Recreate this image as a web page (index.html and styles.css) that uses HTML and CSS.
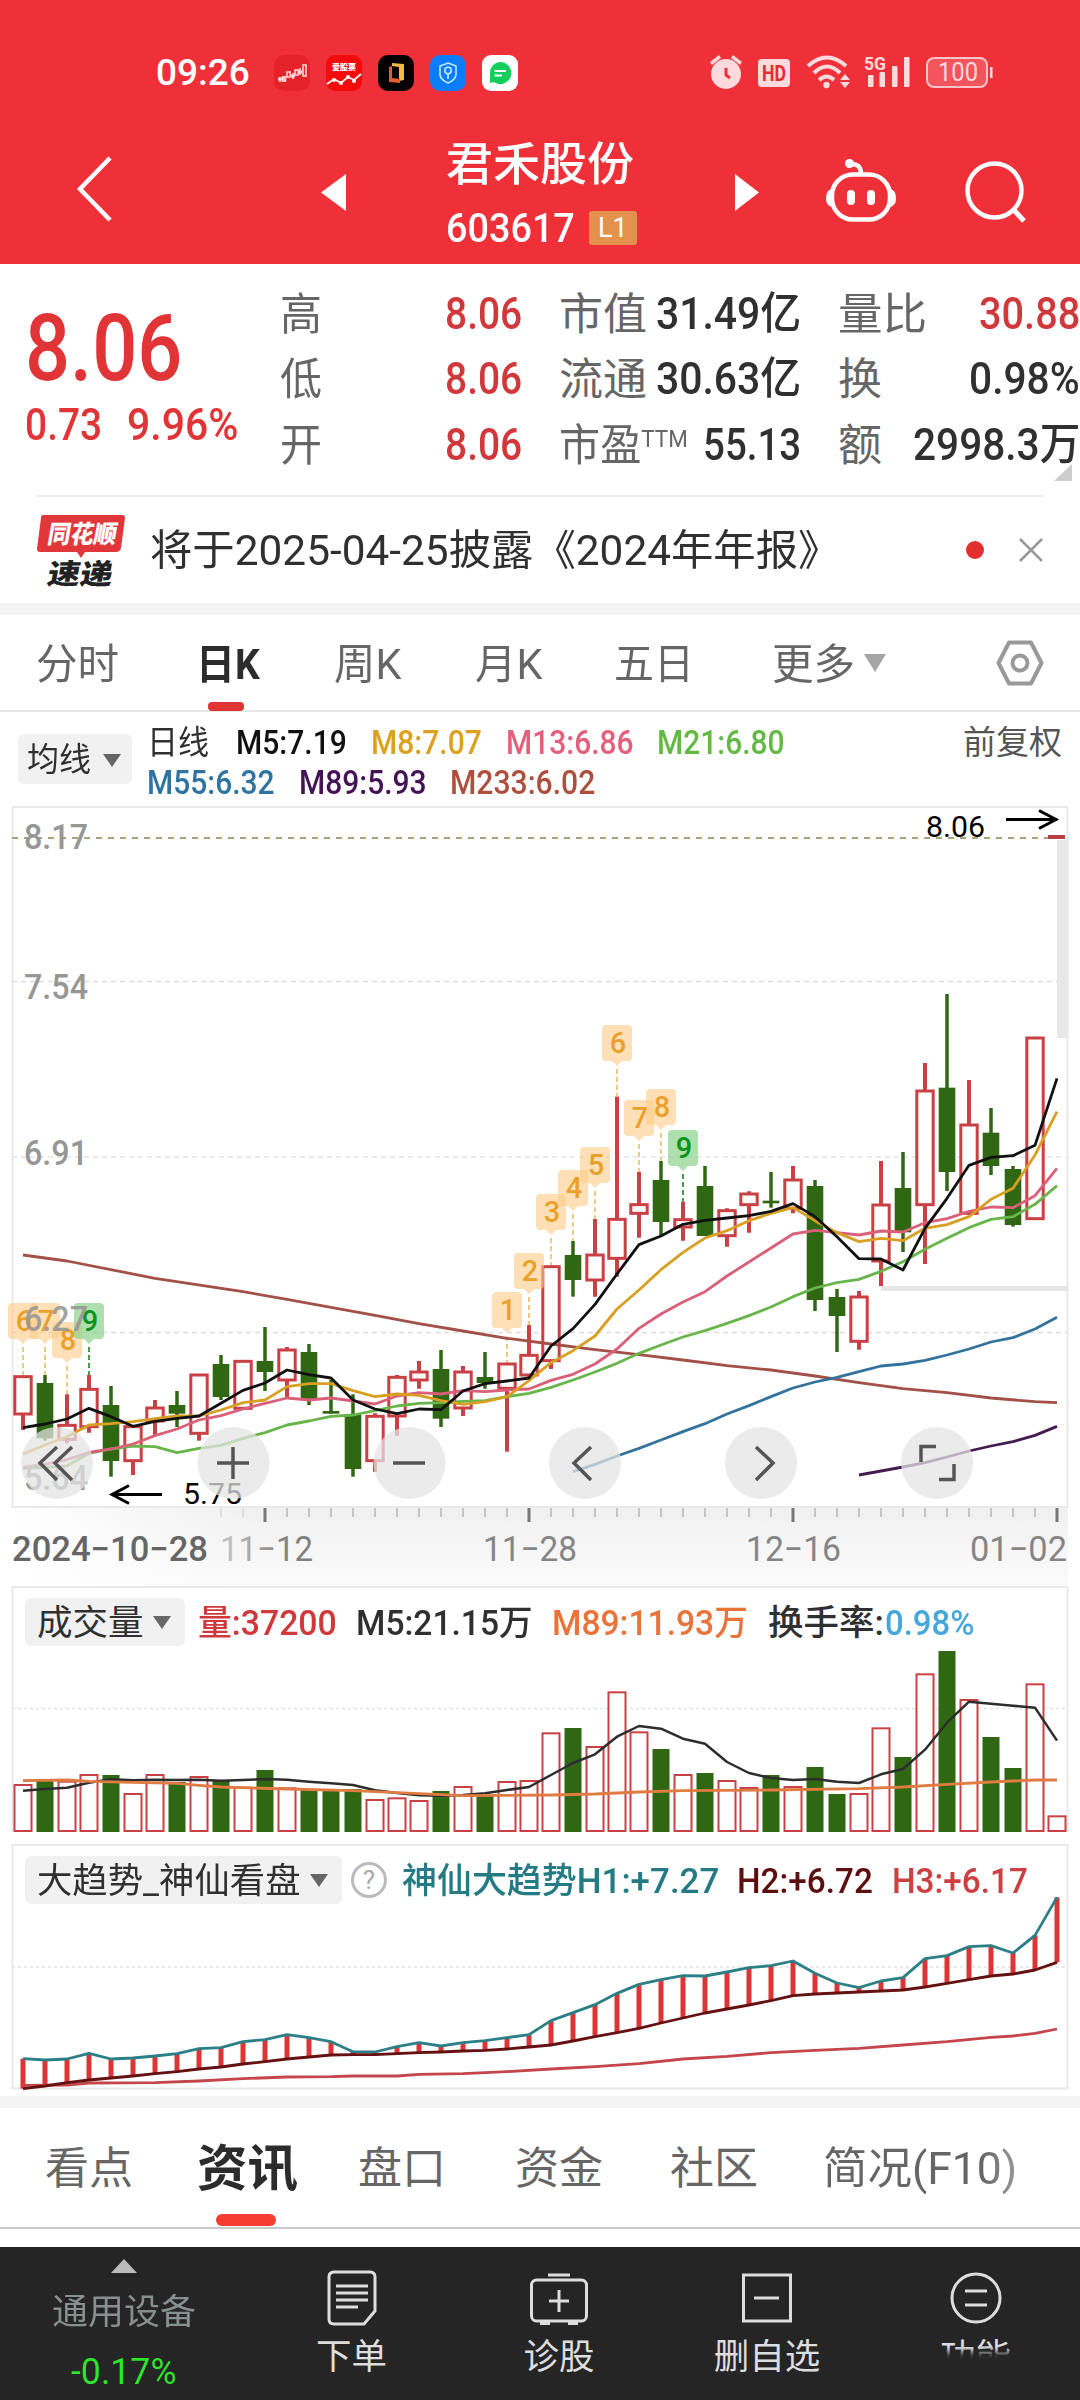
FILE: index.html
```html
<!DOCTYPE html>
<html lang="zh-CN">
<head>
<meta charset="utf-8">
<title>君禾股份 603617</title>
<link rel="stylesheet" href="styles.css">
</head>
<body>
<header class="top">
  <div class="status">
    <span class="clock fit" data-w="94">09:26</span>
    <div class="apps">
      <svg width="36" height="36" viewBox="0 0 36 36"><rect width="36" height="36" rx="10" fill="#e32229"/><g stroke="#ffd9d5" fill="none" stroke-width="1.6"><path d="M6 22v5M10 21v6M19 18v6M26 13v7"/><rect x="8.5" y="22" width="3" height="4"/><rect x="13" y="17" width="3" height="5"/><rect x="21" y="15" width="3" height="5"/><rect x="29" y="10" width="3" height="11"/></g><path d="M4 24h4M17 21h4M24 17h4" stroke="#ffd9d5" stroke-width="3"/></svg>
      <svg width="36" height="36" viewBox="0 0 36 36"><rect width="36" height="36" rx="9" fill="#f50b0b"/><text x="18" y="15" class="mini" text-anchor="middle">爱股票</text><path d="M1 29L8 24L15 28L22 22L28 25L35 19" fill="none" stroke="#fff" stroke-width="1.8"/><g fill="#fff"><circle cx="8" cy="25" r="2"/><circle cx="15" cy="28" r="2"/><circle cx="22" cy="22" r="2"/><circle cx="28" cy="26" r="2"/></g></svg>
      <svg width="36" height="36" viewBox="0 0 36 36"><rect width="36" height="36" rx="10" fill="#050000"/><path d="M14 8L26 9V25L21 26V12L14 11Z" fill="#f2b840"/><path d="M11 12L14 11V23L22 24V28L11 27Z" fill="#e2602c"/></svg>
      <svg width="36" height="36" viewBox="0 0 36 36"><rect width="36" height="36" rx="10" fill="#0a7cff"/><path d="M18 8L26 11V20Q25 25 18 28Q11 25 10 20V11Z" fill="none" stroke="#bfeaff" stroke-width="1.6"/><circle cx="18" cy="15.500" r="3.200" fill="none" stroke="#bfeaff" stroke-width="1.600"/><path d="M18 19V24" stroke="#bfeaff" stroke-width="1.800"/></svg>
      <svg width="36" height="36" viewBox="0 0 36 36"><rect width="36" height="36" rx="9" fill="#fff"/><path d="M18 7a11 11 0 1 1-6 20l-4 1V18A10.500 10.500 0 0 1 18 7Z" fill="#12cf5c"/><path d="M12.500 16H24M12.500 20.500H20" stroke="#fff" stroke-width="1.800"/></svg>
    </div>
    <svg class="signals" width="290" height="40" viewBox="706 53 290 40">
      <g fill="#ffdadd" stroke="none">
        <circle cx="726" cy="74" r="15"/><path d="M710 62l9-7 2 3-9 7zM742 62l-9-7-2 3 9 7z"/>
        <rect x="758" y="59" width="32" height="28" rx="4"/>
        <circle cx="826.500" cy="85" r="3.200"/><path d="M845 74l5 6h-10zM845 88l5-6h-10z"/>
        <rect x="868" y="75" width="5.500" height="12" rx="1"/><rect x="879.500" y="72" width="5.500" height="15" rx="1"/><rect x="892" y="66" width="5.500" height="21" rx="1"/><rect x="904" y="57" width="5.500" height="30" rx="1"/>
        <rect x="990" y="67" width="2.500" height="11"/>
      </g>
      <path d="M726 68V75L730 78" fill="none" stroke="#f03038" stroke-width="3"/>
      <g fill="none" stroke="#ffdadd" stroke-width="4"><path d="M808 66Q827 49 846 66"/><path d="M814 73Q827 60 840 73"/><path d="M819 80Q827 73 834 80"/></g>
      <rect x="927" y="58" width="60" height="29" rx="7" fill="#f4555c" stroke="#ffc4c7" stroke-width="2"/>
      <text x="762" y="81" class="s-hd" textLength="24" lengthAdjust="spacingAndGlyphs">HD</text>
      <text x="864" y="70" class="s-5g" textLength="22" lengthAdjust="spacingAndGlyphs">5G</text>
      <text x="938" y="81" class="s-bat" textLength="40" lengthAdjust="spacingAndGlyphs">100</text>
    </svg>
  </div>
  <div class="nav">
    <svg width="40" height="68" viewBox="0 0 40 68"><path d="M36 3L6 34L36 65" fill="none" stroke="#fff" stroke-width="4.500"/></svg>
    <svg width="25" height="37" viewBox="0 0 25 37"><path d="M25 0V37L0 18.500Z" fill="#fff"/></svg>
    <div class="title">
      <span class="name fit" data-w="188">君禾股份</span>
      <div class="code"><span class="fit" data-w="129">603617</span><span class="lv">L1</span></div>
    </div>
    <svg width="25" height="37" viewBox="0 0 25 37"><path d="M0 0V37L24 18.500Z" fill="#fff"/></svg>
    <svg width="70" height="64" viewBox="826 159 70 64"><g fill="none" stroke="#fff" stroke-width="4.500"><rect x="832" y="174.500" width="58" height="45" rx="21"/><path d="M850 164Q861 163 861 174"/></g><circle cx="849.500" cy="163.500" r="4.500" fill="#fff"/><path d="M832 189q-6 1-6 9t6 9zM890 189q6 1 6 9t-6 9z" fill="#fff"/><path d="M851 194v7M871 194v7" stroke="#fff" stroke-width="8" stroke-linecap="round"/></svg>
    <svg width="62" height="62" viewBox="965 161 62 62"><circle cx="994.500" cy="190.500" r="27" fill="none" stroke="#fff" stroke-width="4.500"/><path d="M1013 209L1024 221" stroke="#fff" stroke-width="5"/></svg>
  </div>
</header>

<section class="quote">
  <div class="price">
    <span class="now"><span class="fit" data-w="157">8.06</span></span>
    <span class="delta"><span class="fit" data-w="77">0.73</span><span class="fit" data-w="111">9.96%</span></span>
  </div>
  <div class="grid">
    <div class="r"><i class="fit" data-w="42">高</i><b class="up fit" data-w="77">8.06</b><i class="fit" data-w="88">市值</i><b class="fit" data-w="145">31.49亿</b><i class="fit" data-w="89">量比</i><b class="up fit" data-w="101">30.88</b></div>
    <div class="r"><i class="fit" data-w="42">低</i><b class="up fit" data-w="77">8.06</b><i class="fit" data-w="88">流通</i><b class="fit" data-w="145">30.63亿</b><i class="fit" data-w="44">换</i><b class="fit" data-w="111">0.98%</b></div>
    <div class="r"><i class="fit" data-w="42">开</i><b class="up fit" data-w="77">8.06</b><i class="fit" data-w="129">市盈<sup>TTM</sup></i><b class="fit" data-w="98">55.13</b><i class="fit" data-w="44">额</i><b class="fit" data-w="167">2998.3万</b></div>
  </div>
  <span class="corner"></span>
</section>

<section class="news">
  <svg width="90" height="74" viewBox="36 511 90 74"><path d="M43 513H122Q125 513 125 516L121 546Q120 550 116 550H85L81 556L77 550H40Q37 550 37 547L41 516Q41 513 43 513Z" fill="#e1373a"/><text class="logo-a" x="142" y="541" textLength="69" lengthAdjust="spacingAndGlyphs" transform="skewX(-10)">同花顺</text><text class="logo-b" x="149" y="582" textLength="65" lengthAdjust="spacingAndGlyphs" transform="skewX(-10)">速递</text></svg>
  <span class="headline fit" data-w="690">将于2025-04-25披露《2024年年报》</span>
  <span class="dot"></span>
  <svg width="26" height="26" viewBox="0 0 26 26"><path d="M2 2L24 24M24 2L2 24" stroke="#999" stroke-width="2.500"/></svg>
</section>
<div class="band"></div>

<nav class="tabs">
  <span class="fit" data-w="83">分时</span><span class="on"><span class="fit" data-w="64">日K</span></span><span class="fit" data-w="67">周K</span><span class="fit" data-w="67">月K</span><span class="fit" data-w="80">五日</span><span class="fit" data-w="83">更多</span>
  <svg width="22" height="18" viewBox="0 0 22 18"><path d="M0 0H22L11 18Z" fill="#a5a5a5"/></svg>
  <svg width="50" height="48" viewBox="0 0 50 48"><path d="M14 3.500H36L46.500 24L36 44.500H14L3.500 24Z" fill="none" stroke="#999" stroke-width="4" stroke-linejoin="round"/><circle cx="25" cy="24" r="7.500" fill="none" stroke="#999" stroke-width="4"/></svg>
</nav>

<section class="ma">
  <div class="pick"><span class="fit" data-w="64">均线</span><svg width="18" height="13" viewBox="0 0 18 13"><path d="M0 0H18L9 13Z" fill="#666"/></svg></div>
  <div class="lines">
    <div class="l1"><span class="fit" data-w="62">日线</span><span class="fit black" data-w="111">M5:7.19</span><span class="fit gold" data-w="111">M8:7.07</span><span class="fit pink" data-w="128">M13:6.86</span><span class="fit lime" data-w="128">M21:6.80</span><span class="fit dim" data-w="99">前复权</span></div>
    <div class="l2"><span class="fit blue" data-w="128">M55:6.32</span><span class="fit plum" data-w="128">M89:5.93</span><span class="fit rust" data-w="145">M233:6.02</span></div>
  </div>
</section>

<section class="panel">
  <svg id="kline" width="1080" height="786" viewBox="0 800 1080 786"></svg>
</section>
<section class="panel">
  <svg id="volume" width="1080" height="254" viewBox="0 1586 1080 254"></svg>
  <div class="head vol"><div class="pick"><span class="fit" data-w="107">成交量</span><svg width="18" height="13" viewBox="0 0 18 13"><path d="M0 0H18L9 13Z" fill="#666"/></svg></div><span class="fit up" data-w="139">量:37200</span><span class="fit" data-w="177">M5:21.15万</span><span class="fit orange" data-w="196">M89:11.93万</span><span class="fit" data-w="116">换手率:</span><span class="fit sky" data-w="90">0.98%</span></div>
</section>
<section class="panel">
  <svg id="trend" width="1080" height="256" viewBox="0 1840 1080 256"></svg>
  <div class="head trd"><div class="pick"><span class="fit" data-w="264">大趋势_神仙看盘</span><svg width="18" height="13" viewBox="0 0 18 13"><path d="M0 0H18L9 13Z" fill="#666"/></svg></div><span class="q">?</span><span class="fit teal" data-w="317">神仙大趋势H1:+7.27</span><span class="fit wine" data-w="136">H2:+6.72</span><span class="fit up2" data-w="136">H3:+6.17</span></div>
</section>
<div class="band"></div>

<nav class="tabs2">
  <span class="fit" data-w="88">看点</span><span class="on"><span class="fit" data-w="101">资讯</span></span><span class="fit" data-w="88">盘口</span><span class="fit" data-w="88">资金</span><span class="fit" data-w="88">社区</span><span class="fade"><span class="fit" data-w="194">简况(F10)</span></span>
</nav>

<footer class="bar">
  <div class="index"><svg width="26" height="14" viewBox="0 0 26 14"><path d="M13 0L26 14H0Z" fill="#bbb"/></svg><span class="fit" data-w="144">通用设备</span><span class="fit down" data-w="106">-0.17%</span></div>
  <div class="act"><svg width="60" height="56" viewBox="0 0 60 56"><g fill="none" stroke="#ddd" stroke-width="3"><path d="M12 2H48Q53 2 53 7V41L42 54H12Q7 54 7 49V7Q7 2 12 2Z"/><path d="M14 16H46M14 23H46M14 30H46M14 37H36"/></g></svg><span class="fit" data-w="71">下单</span></div>
  <div class="act"><svg width="60" height="56" viewBox="0 0 60 56"><g fill="none" stroke="#ddd" stroke-width="3"><rect x="2.500" y="10" width="55" height="41" rx="5"/><path d="M19 5H41M30 20V42M20 31H40"/><path d="M11 53H21M39 53H49" stroke-width="4"/></g></svg><span class="fit" data-w="71">诊股</span></div>
  <div class="act"><svg width="60" height="56" viewBox="0 0 60 56"><g fill="none" stroke="#ddd" stroke-width="3"><rect x="6.500" y="5" width="47" height="46"/><path d="M17 28H42"/></g></svg><span class="fit" data-w="107">删自选</span></div>
  <div class="act last"><svg width="60" height="56" viewBox="0 0 60 56"><g fill="none" stroke="#ddd" stroke-width="3"><circle cx="30" cy="28" r="24"/><path d="M19 21H41M19 35H41"/></g></svg><span class="fit" data-w="71">功能</span><span class="smudge"></span></div>
</footer>
<script src="chart.js"></script>
</body>
</html>
```
FILE: styles.css
```css
* { box-sizing: border-box; }
body { margin: 0; width: 1080px; background: #fff; color: #303030; font-family: Roboto, "Noto Sans CJK SC", sans-serif; }
svg { display: block; }
i, b { font-style: normal; font-weight: 500; }
.fit { display: block; white-space: nowrap; transform-origin: 0 50%; width: max-content; }

.top { height: 264px; background: #f03038; color: #fff; }
.status { height: 118px; padding-top: 28px; display: grid; grid-template-columns: 156px 118px 432px 1fr; align-items: center; }
.clock { grid-column: 2; font-size: 37px; line-height: 44px; font-weight: 500; }
.apps { display: flex; gap: 16px; }
.mini { font: 900 8px "Noto Sans CJK SC", sans-serif; fill: #fff; }
.s-hd { font: 700 22px Roboto, sans-serif; fill: #e62b33; }
.s-5g { font: 700 19px Roboto, sans-serif; fill: #ffdadd; }
.s-bat { font: 400 25px Roboto, sans-serif; fill: #ffdadd; }
.nav { height: 146px; padding: 0 0 0 74px; display: grid; grid-template-columns: 247px 125px 289px 91px 139px 1fr; align-items: start; }
.nav > svg { margin-top: 38px; }
.nav > svg:first-child { margin-top: 37px; }
.nav > svg:nth-child(2), .nav > svg:nth-child(4) { margin-top: 56px; }
.nav > svg:nth-child(5) { margin-top: 41px; }
.nav > svg:nth-child(6) { margin-top: 43px; }
.title { padding-top: 17px; }
.name { font-size: 46px; line-height: 58px; font-weight: 500; }
.code { display: flex; align-items: center; gap: 14px; height: 40px; margin-top: 15px; font-size: 41px; line-height: 40px; font-weight: 500; }
.lv { width: 48px; height: 34px; border-radius: 3px; background: #e3914c; font: 400 27px/34px Roboto, sans-serif; text-align: center; }

.quote { position: relative; height: 231px; display: grid; grid-template-columns: 280px 1fr; }
.price { padding: 41px 0 0 25px; color: #e03436; }
.now { display: block; font-size: 93px; line-height: 88px; font-weight: 500; }
.delta { display: flex; gap: 25px; font-size: 45px; line-height: 64px; }
.delta span { font-weight: 500; }
.grid { padding-top: 17px; }
.r { height: 65.500px; display: grid; grid-template-columns: 165px 114px 96px 146px 37px auto 1fr; align-items: center; font-size: 44px; line-height: 60px; }
.r i { color: #666; font-weight: 400; padding-top: 2px; }
.r i:nth-child(5) { grid-column: 6; }
.r b:nth-child(4), .r b:nth-child(6) { justify-self: end; }
.r sup { font-size: 24px; line-height: 0; vertical-align: 14px; }
.up { color: #d0383b; }
.corner { position: absolute; right: 8px; bottom: 14px; border-left: 18px solid transparent; border-bottom: 17px solid #ccc; }

.news { height: 108px; margin: 0 36px; border-top: 2px solid #ececec; display: grid; grid-template-columns: 114px 816px 52px 1fr; align-items: center; }
.logo-a { font: 900 25px "Noto Sans CJK SC", sans-serif; fill: #fff; }
.logo-b { font: 900 28px "Noto Sans CJK SC", sans-serif; fill: #222; }
.headline { font-size: 42px; line-height: 60px; padding-top: 2px; }
.dot { width: 18px; height: 18px; border-radius: 50%; background: #e1302f; }
.band { height: 12px; background: #f4f4f4; }

.tabs { height: 97px; border-bottom: 2px solid #e6e6e6; padding-left: 36px; display: grid; grid-template-columns: 160px 138px 141px 139px 158px 92px 131px 1fr; align-items: center; color: #666; font-size: 42px; line-height: 60px; }
.tabs .fit { padding-top: 4px; }
.tabs .on, .tabs2 .on { position: relative; color: #2c2c2c; font-weight: 700; }
.tabs .on::after { content: ""; position: absolute; left: 12px; top: 71px; width: 36px; height: 9px; border-radius: 4px; background: #e13434; }

.ma { height: 88px; padding: 11px 0 0 18px; display: grid; grid-template-columns: 129px 1fr; font-size: 33px; line-height: 40px; }
.pick { display: flex; align-items: center; justify-content: space-between; background: #f1f1f1; border-radius: 6px; }
.ma .pick { width: 114px; height: 50px; margin-top: 11px; padding: 2px 11px 0 9px; }
.l1 { display: grid; grid-template-columns: 89px 135px 135px 151px 306px 1fr; }
.l2 { display: grid; grid-template-columns: 152px 151px 1fr; }
.l1 span:not(.dim), .l2 span { font-weight: 500; }
.black { color: #111; } .gold { color: #dba11f; } .pink { color: #e45f7b; } .lime { color: #62b944; }
.blue { color: #2f74a0; } .plum { color: #451355; } .rust { color: #ac4f3d; } .dim { color: #555; }
.l1 span:first-child { font-weight: 400; }

.panel { display: grid; }
.panel > * { grid-area: 1 / 1; }
.head { display: grid; align-items: center; align-self: start; height: 48px; font-size: 35.500px; line-height: 46px; }
.head .fit { padding-top: 2px; font-weight: 500; }
.head .pick .fit { font-weight: 400; }
.head .pick { height: 48px; padding: 0 14px 0 12px; }
.vol { margin-top: 12px; padding-left: 25px; grid-template-columns: 160px 13px 158px 196px 216px 117px 1fr; }
.vol .pick { grid-column: 1; }
.vol > span:nth-child(2) { grid-column: 3; }
.trd { margin-top: 16px; padding-left: 25px; grid-template-columns: 317px 60px 335px 155px 1fr; }
.q { width: 36px; height: 36px; margin-left: 9px; border: 3px solid #bbb; border-radius: 50%; color: #aaa; font-size: 26px; line-height: 31px; text-align: center; }
.orange { color: #ea733a; } .sky { color: #45a7dc; } .teal { color: #257b83; } .wine { color: #5d0f10; } .up2 { color: #cc4041; }

.ax { font: 500 35px Roboto, sans-serif; fill: #969696; }
.dt { font: 400 35px Roboto, sans-serif; fill: #858585; }
.mk { font: 400 30px Roboto, sans-serif; fill: #000; }
.bd { font: 500 29px Roboto, sans-serif; text-anchor: middle; }

.tabs2 { height: 121px; margin-bottom: 18px; padding: 0 0 0 45px; border-bottom: 2px solid #c8c8c8; display: grid; grid-template-columns: 152px 161px 157px 155px 153px 1fr; align-items: center; color: #666; font-size: 44px; line-height: 60px; }
.tabs2 .fit { padding-top: 3px; }
.tabs2 .on { font-size: 50px; }
.tabs2 .on::after { content: ""; position: absolute; left: 19px; top: 78px; width: 60px; height: 12px; border-radius: 6px; background: #f93c32; }
.fade { width: 200px; -webkit-mask-image: linear-gradient(90deg, #000 80%, rgba(0,0,0,.6)); }

.bar { height: 153px; background: #252525; display: grid; grid-template-columns: 248px 207px 208px 208px 1fr; color: #ddd; font-size: 35.500px; line-height: 44px; }
.index { display: flex; flex-direction: column; align-items: center; padding-top: 12px; color: #87908f; }
.index .fit:nth-child(2) { margin-top: 17px; }
.index .down { margin-top: 16px; color: #2ee52e; font-size: 36px; }
.act { position: relative; display: flex; flex-direction: column; align-items: center; padding-top: 23px; }
.act .fit { margin-top: 9px; }
.last { justify-self: start; width: 209px; padding-right: 0; overflow: hidden; }
.smudge { position: absolute; left: 15px; right: 0; top: 105px; height: 60px; background: #252525; filter: blur(3px); }
```
FILE: chart.js
```js
// Squeeze each label to the width its cell reserves for it.
document.querySelectorAll('.fit').forEach(function (el) {
  var natural = el.offsetWidth, w = +el.dataset.w;
  el.style.transform = 'scaleX(' + (w / natural) + ')';
  el.style.marginRight = (w - natural) + 'px';
});

var STEP = 22, X0 = 23;
function x(i) { return X0 + i * STEP; }
function line(pts, top, color, w, start) {
  // pts: flat list of values, or [index, value] pairs; three units per pixel
  var p = pts.map(function (v, k) {
    return Array.isArray(v) ? x(v[0]) + ',' + (top + v[1] / 3) : x(k + (start || 0)) + ',' + (top + v / 3);
  });
  return '<polyline points="' + p.join(' ') + '" fill="none" stroke="' + color + '" stroke-width="' + w + '" stroke-linejoin="round"/>';
}
function hline(y, color, dash, w) {
  return '<path d="M12 ' + y + 'H1067" stroke="' + color + '" stroke-width="' + w + '" stroke-dasharray="' + dash + '"/>';
}
function text(cls, X, y, w, s, extra) {
  return '<text class="' + cls + '" x="' + X + '" y="' + y + '" textLength="' + w + '" lengthAdjust="spacingAndGlyphs" ' + (extra || '') + '>' + s + '</text>';
}
function frame(y0, y1) {
  return '<path d="M12.500 ' + y0 + 'H1067.500V' + y1 + 'H12.500Z" fill="none" stroke="#e9e9e9" stroke-width="2"/>';
}

// ---- candles: [up, high, bodyTop, bodyBottom, low]
var C = [
[1,1730,1730,1842,1890],[0,1725,1749,1915,1922],[1,1783,1876,1918,1930],[1,1725,1768,1880,1898],[0,1758,1815,1983,2030],
[1,1880,1880,1982,2025],[1,1800,1824,1863,1907],[0,1773,1815,1841,1881],[1,1725,1725,1900,1922],[0,1665,1692,1791,1800],
[1,1684,1684,1825,1825],[0,1581,1683,1716,1773],[1,1641,1650,1740,1793],[0,1632,1656,1800,1815],[0,1740,1833,1841,1841],
[0,1783,1845,2007,2030],[1,1840,1849,1982,2015],[1,1725,1732,1848,1907],[1,1683,1716,1740,1766],[0,1650,1707,1856,1881],
[1,1698,1716,1824,1848],[0,1656,1731,1749,1766],[1,1692,1692,1765,1955],[1,1575,1666,1725,1735],[1,1400,1400,1682,1707],
[0,1323,1365,1440,1490],[1,1257,1365,1440,1490],[1,890,1258,1375,1430],[1,1116,1214,1240,1313],[0,1083,1140,1266,1305],
[1,1205,1259,1281,1322],[0,1098,1158,1308,1308],[1,1225,1232,1307,1340],[1,1174,1182,1214,1298],[0,1116,1202,1210,1223],
[1,1098,1140,1225,1240],[0,1140,1158,1500,1533],[0,1467,1491,1548,1656],[1,1473,1491,1624,1649],[1,1083,1215,1383,1458],
[0,1056,1164,1297,1356],[1,789,873,1214,1392],[0,582,863,1116,1173],[1,840,975,1240,1245],[0,924,998,1098,1125],
[0,1098,1107,1275,1280],[1,714,714,1256,1256]];
var R = '#c94045', G = '#2f6712', k = '';
k += '<defs><linearGradient id="axis" x2="0" y2="1"><stop stop-color="#f0f0f0"/><stop offset="1" stop-color="#fbfbfb"/></linearGradient><linearGradient id="lead"><stop stop-color="#fff"/><stop offset="1" stop-color="#fff" stop-opacity="0"/></linearGradient><linearGradient id="ink" gradientUnits="userSpaceOnUse" x1="215" x2="290"><stop stop-color="#ccc"/><stop offset="1" stop-color="#808080"/></linearGradient></defs>';
k += '<rect x="12" y="1508" width="1056" height="78" fill="url(#axis)"/><rect x="12" y="1508" width="240" height="78" fill="url(#lead)"/>';
k += frame(807, 1507);
k += hline(838, '#a9a47c', '6 6', 2) + hline(981.5, '#ddd', '5 4', 1.5) + hline(1157, '#e2e2e2', '5 4', 1.5) + hline(1332.5, '#ddd', '5 4', 1.5);
k += '<rect x="1057" y="840" width="11" height="198" fill="#e8e8e8"/><rect x="881" y="1286" width="187" height="5" fill="#e6e6e6"/>';

var badges = [[0,6,1303],[1,7,1303],[2,8,1322],[3,9,1303,1],[22,1,1292],[23,2,1253],[24,3,1194],[25,4,1170],[26,5,1147],[27,6,1025],[28,7,1100],[29,8,1089],[30,9,1130,1]];
badges.forEach(function (b) {
  var cx = x(b[0]), y = b[2], g = b[3];
  k += '<path d="M' + cx + ' ' + (y + 44) + 'V' + (800 + C[b[0]][1] / 3) + '" stroke="' + (g ? '#4a9a4e' : '#ecca86') + '" stroke-width="2" stroke-dasharray="5 3"/>';
});
C.forEach(function (c, i) {
  var h = 800 + c[1] / 3, t = 800 + c[2] / 3, b = 800 + c[3] / 3, l = 800 + c[4] / 3, X = x(i);
  if (c[0]) {
    k += '<path d="M' + X + ' ' + h + 'V' + t + 'M' + X + ' ' + b + 'V' + l + '" stroke="' + R + '" stroke-width="4"/>';
    k += '<rect x="' + (X - 8.2) + '" y="' + t + '" width="16.400" height="' + (b - t) + '" fill="#fff" stroke="' + R + '" stroke-width="3"/>';
  } else {
    k += '<path d="M' + X + ' ' + h + 'V' + l + '" stroke="' + G + '" stroke-width="3.500"/>';
    k += '<rect x="' + (X - 8.3) + '" y="' + t + '" width="16.600" height="' + (b - t) + '" fill="' + G + '"/>';
  }
});
k += '<rect x="1048" y="835" width="17" height="4" fill="#b8403f"/>';

k += line([[0,165],[2,183],[6,235],[10,275],[12,298],[16,346],[18,371],[20,393],[22,415],[24,432],[26,449],[28,464],[30,480],[32,497],[34,510],[36,528],[38,548],[40,566],[42,578],[44,594],[46,605],[47,608]], 1200, '#a25048', 2.8);
k += line([815,793,768,745,720,695,671,642,617,590,564,546,532,515,498,492,481,465,447,426,413,387,352], 1200, '#33729c', 2.8, 25);
k += line([825,813,801,788,771,753,738,725,706,679], 1200, '#451a50', 2.8, 38);
k += line([805,802,798,760,747,738,740,758,745,736,715,698,675,663,649,645,632,618,610,608,604,602,590,580,562,540,516,490,460,435,411,392,370,347,321,290,264,248,238,214,185,148,115,83,58,50,13,-43], 1200, '#68b64b', 2.8);
k += line([802,793,779,757,747,732,707,687,660,647,627,610,594,600,594,603,612,588,578,582,572,575,570,567,541,523,492,447,385,342,306,275,228,186,144,102,91,98,105,93,96,68,56,34,21,23,-13,-95], 1200, '#d96078', 2.8);
k += line([762,735,710,675,671,665,656,648,648,630,608,600,560,551,551,572,590,582,586,602,613,605,590,542,488,452,408,327,270,209,157,114,92,62,40,23,62,98,125,115,122,85,74,50,-2,-35,-135,-265], 1200, '#d99f23', 2.8);
k += line([683,672,657,625,650,679,664,655,648,610,571,549,510,524,534,600,627,641,627,629,573,551,543,534,438,386,313,222,134,108,73,61,54,47,34,11,50,110,176,177,210,85,-5,-104,-128,-133,-164,-365], 1200, '#111', 2.8);

badges.forEach(function (b) {
  var cx = x(b[0]), y = b[2], g = b[3];
  k += '<path d="M' + (cx - 11) + ' ' + y + 'h22q4 0 4 4v28q0 4-4 4h-6l-5 5l-5-5h-6q-4 0-4-4v-28q0-4 4-4z" fill="' + (g ? '#8ad18d' : '#ffcb85') + '" fill-opacity="' + (g ? .7 : .6) + '"/>';
  k += '<text class="bd" x="' + (cx + 1) + '" y="' + (y + 28) + '" fill="' + (g ? '#0a951c' : '#e9a12c') + '">' + b[1] + '</text>';
});
[['8.17',849],['7.54',999],['6.91',1165],['6.27',1331],['5.64',1490]].forEach(function (a) {
  k += text('ax', 24, a[1], 64, a[0], a[1] === 1331 ? 'fill-opacity=".9"' : '');
});
k += text('mk', 926, 837, 59, '8.06') + text('mk', 183, 1504, 59, '5.75');
k += '<path d="M1006 819.500H1057M1039 810.500L1056 819.500L1039 828.500M162 1494.600H112M129 1485.500L112 1494.600L129 1503.500" fill="none" stroke="#000" stroke-width="3"/>';

[57,233.5,409.5,585,761,937].forEach(function (cx) { k += '<circle cx="' + cx + '" cy="1463" r="36" fill="#e4e4e4" fill-opacity=".74"/>'; });
k += '<path d="M57 1447L40 1463L57 1480M72 1447L55 1463L72 1480M217 1463H249M233 1447V1479M393 1463H425M591 1447L574 1463L591 1480M756 1447L773 1463L756 1480M936 1446.500H921V1462M939 1479.500H954V1464" fill="none" stroke="#555" stroke-width="3.500"/>';

for (var i = 9; i < 48; i++) {
  var major = i === 11 || i === 23 || i === 35 || i === 47;
  k += '<path d="M' + x(i) + ' 1508V' + (major ? 1522 : 1517) + '" stroke="' + (major ? '#777' : i < 11 ? '#ccc' : '#999') + '" stroke-width="' + (major ? 3 : 1) + '"/>';
}
k += text('dt', 12, 1561, 196, '2024−10−28', 'style="fill:#666;font-weight:500"');
k += text('dt', 220, 1561, 93, '11−12', 'style="fill:url(#ink)"') + text('dt', 483, 1561, 94, '11−28') + text('dt', 746, 1561, 95, '12−16') + text('dt', 970, 1561, 97, '01−02');
document.getElementById('kline').innerHTML = k;

// ---- volume: negative entries are falling days
var V = [615,-603,605,585,-585,642,585,-606,591,-603,623,-570,625,-627,-633,-627,660,655,663,-633,621,-645,606,603,460,-444,501,337,457,-507,585,-579,603,624,-585,621,-561,-642,642,445,-531,283,-213,360,-471,-564,313,709];
var v = '<path d="M12.500 1832V1587H1067.500V1832" fill="none" stroke="#e9e9e9" stroke-width="2"/>' + hline(1708.5, '#e2e2e2', '3 3', 1.5);
V.forEach(function (a, n) {
  var t = 1580 + Math.abs(a) / 3;
  v += a < 0 ? '<rect x="' + (x(n) - 8.5) + '" y="' + t + '" width="17" height="' + (1832 - t) + '" fill="' + G + '"/>'
    : '<rect x="' + (x(n) - 8.5) + '" y="' + t + '" width="17" height="' + (1831 - t) + '" fill="#fff" stroke="' + R + '" stroke-width="2"/>';
});
v += line([632,627,623,608,598,601,599,600,599,602,600,597,599,605,610,615,631,639,646,647,645,640,630,621,585,549,523,470,438,446,476,491,546,579,594,600,597,605,609,583,567,509,428,365,371,377,383,482], 1580, '#2d2d2d', 2.5);
v += line([[0,602],[2,600],[3,604],[5,607],[7,610],[8,616],[9,621],[12,627],[15,632],[18,641],[20,647],[24,645],[26,642],[28,636],[30,632],[34,630],[38,626],[40,621],[42,613],[44,606],[46,600],[47,600]], 1580, '#e07c42', 2.8);
document.getElementById('volume').innerHTML = v;

// ---- trend ribbon
var H1 = [686,690,687,670,687,684,678,671,656,653,635,629,614,623,635,665,666,650,638,648,638,632,623,614,572,548,524,490,463,449,437,438,426,413,407,393,430,459,473,453,443,386,377,350,347,369,316,202];
var H2 = [776,768,758,750,744,738,731,725,717,711,702,695,687,681,675,674,674,671,668,666,663,661,657,651,645,633,620,608,595,579,564,549,537,525,512,497,492,489,486,483,480,471,460,449,438,432,420,397];
var t = frame(1845, 2088.5) + hline(1967, '#e2e2e2', '3 3', 1.5);
H1.forEach(function (a, n) {
  t += '<path d="M' + x(n) + ' ' + (1830 + a / 3) + 'V' + (1830 + H2[n] / 3) + '" stroke="#dd3436" stroke-width="5"/>';
});
t += line([[0,766],[2,765],[3,759],[6,758],[8,753],[10,746],[12,741],[14,740],[15,738],[17,738],[18,733],[20,731],[22,725],[24,717],[26,710],[28,701],[30,687],[32,679],[34,668],[36,661],[38,655],[40,645],[42,635],[44,622],[45,618],[46,610],[47,597]], 1830, '#c4454b', 2.8);
t += line(H1, 1830, '#2b7f86', 2.8) + line(H2, 1830, '#651012', 2.8);
document.getElementById('trend').innerHTML = t;
```
